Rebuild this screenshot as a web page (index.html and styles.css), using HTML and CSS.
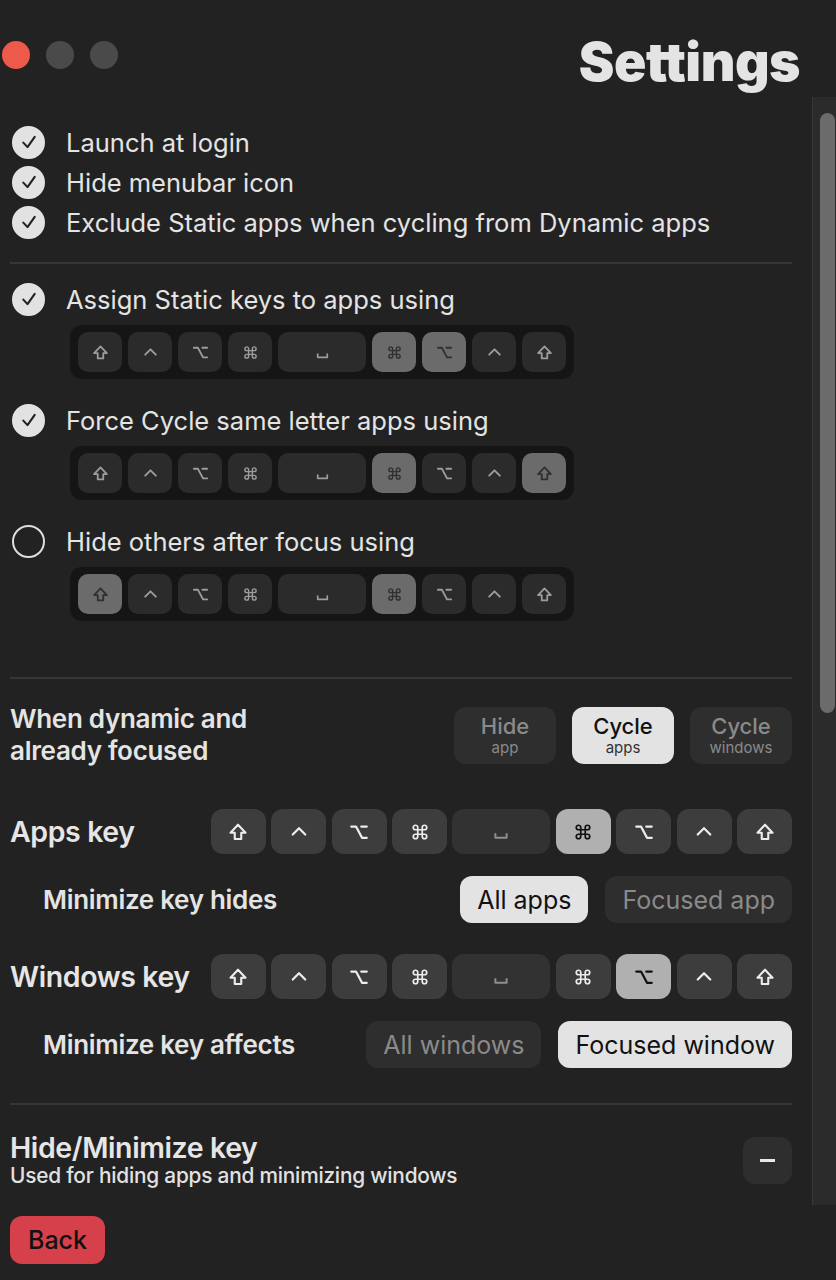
FILE: index.html
```html
<!DOCTYPE html>
<html lang="en">
<head>
<meta charset="utf-8">
<title>Settings</title>
<link rel="stylesheet" href="styles.css">
</head>
<body>
<svg class="defs" width="0" height="0" aria-hidden="true">
  <defs>
    <symbol id="i-shift" viewBox="0 0 16 16"><path d="M8 2.2 L14 8.6 H10.6 V13.6 H5.4 V8.6 H2 Z" fill="none" stroke="currentColor" stroke-width="1.7" stroke-linejoin="round"/></symbol>
    <symbol id="i-ctrl" viewBox="0 0 16 16"><path d="M3 10 L8 5 L13 10" fill="none" stroke="currentColor" stroke-width="1.8" stroke-linecap="round" stroke-linejoin="round"/></symbol>
    <symbol id="i-opt" viewBox="0 0 16 16"><path d="M1.8 3.6 H5.6 L10.4 12.6 H14.2 M9.8 3.6 H14.2" fill="none" stroke="currentColor" stroke-width="1.8" stroke-linecap="round" stroke-linejoin="round"/></symbol>
    <symbol id="i-cmd" viewBox="0 0 24 24"><path d="M15 6v12a3 3 0 1 0 3-3H6a3 3 0 1 0 3 3V6a3 3 0 1 0-3 3h12a3 3 0 1 0-3-3" fill="none" stroke="currentColor" stroke-width="2.3" stroke-linecap="round" stroke-linejoin="round"/></symbol>
    <symbol id="i-space" viewBox="0 0 16 16"><path d="M3.5 9.5 V12.5 H12.5 V9.5" fill="none" stroke="currentColor" stroke-width="1.6" stroke-linecap="round" stroke-linejoin="round"/></symbol>
    <symbol id="i-check" viewBox="0 0 16 16"><path d="M4.2 8.4 L7 11.4 L11.8 4.6" fill="none" stroke="currentColor" stroke-width="1.4" stroke-linecap="round" stroke-linejoin="round"/></symbol>
  </defs>
</svg>

<div class="window">
  <header class="titlebar">
    <div class="lights">
      <span class="light red"></span>
      <span class="light"></span>
      <span class="light"></span>
    </div>
    <h1 class="title">Settings</h1>
  </header>

  <div class="scroll-area">
    <main class="content">
      <section class="general">
        <div class="check-row"><span class="check on"><svg><use href="#i-check"/></svg></span><span class="check-label">Launch at login</span></div>
        <div class="check-row"><span class="check on"><svg><use href="#i-check"/></svg></span><span class="check-label">Hide menubar icon</span></div>
        <div class="check-row"><span class="check on"><svg><use href="#i-check"/></svg></span><span class="check-label">Exclude Static apps when cycling from Dynamic apps</span></div>
      </section>

      <hr class="sep sep-first">

      <section class="shortcuts">
        <div class="check-row"><span class="check on"><svg><use href="#i-check"/></svg></span><span class="check-label">Assign Static keys to apps using</span></div>
        <div class="keybar">
          <span class="k"><svg><use href="#i-shift"/></svg></span>
          <span class="k"><svg><use href="#i-ctrl"/></svg></span>
          <span class="k"><svg><use href="#i-opt"/></svg></span>
          <span class="k"><svg class="cmd"><use href="#i-cmd"/></svg></span>
          <span class="k space"><svg><use href="#i-space"/></svg></span>
          <span class="k on"><svg class="cmd"><use href="#i-cmd"/></svg></span>
          <span class="k on"><svg><use href="#i-opt"/></svg></span>
          <span class="k"><svg><use href="#i-ctrl"/></svg></span>
          <span class="k"><svg><use href="#i-shift"/></svg></span>
        </div>

        <div class="check-row"><span class="check on"><svg><use href="#i-check"/></svg></span><span class="check-label">Force Cycle same letter apps using</span></div>
        <div class="keybar">
          <span class="k"><svg><use href="#i-shift"/></svg></span>
          <span class="k"><svg><use href="#i-ctrl"/></svg></span>
          <span class="k"><svg><use href="#i-opt"/></svg></span>
          <span class="k"><svg class="cmd"><use href="#i-cmd"/></svg></span>
          <span class="k space"><svg><use href="#i-space"/></svg></span>
          <span class="k on"><svg class="cmd"><use href="#i-cmd"/></svg></span>
          <span class="k"><svg><use href="#i-opt"/></svg></span>
          <span class="k"><svg><use href="#i-ctrl"/></svg></span>
          <span class="k on"><svg><use href="#i-shift"/></svg></span>
        </div>

        <div class="check-row"><span class="check"></span><span class="check-label">Hide others after focus using</span></div>
        <div class="keybar">
          <span class="k on"><svg><use href="#i-shift"/></svg></span>
          <span class="k"><svg><use href="#i-ctrl"/></svg></span>
          <span class="k"><svg><use href="#i-opt"/></svg></span>
          <span class="k"><svg class="cmd"><use href="#i-cmd"/></svg></span>
          <span class="k space"><svg><use href="#i-space"/></svg></span>
          <span class="k on"><svg class="cmd"><use href="#i-cmd"/></svg></span>
          <span class="k"><svg><use href="#i-opt"/></svg></span>
          <span class="k"><svg><use href="#i-ctrl"/></svg></span>
          <span class="k"><svg><use href="#i-shift"/></svg></span>
        </div>
      </section>

      <hr class="sep sep-second">

      <section class="dynamic">
        <div class="dyn-label">When dynamic and<br>already focused</div>
        <div class="seg-group">
          <div class="seg"><span class="seg-main">Hide</span><span class="seg-sub">app</span></div>
          <div class="seg on"><span class="seg-main">Cycle</span><span class="seg-sub">apps</span></div>
          <div class="seg"><span class="seg-main">Cycle</span><span class="seg-sub">windows</span></div>
        </div>
      </section>

      <section class="key-row apps-key">
        <div class="key-label">Apps key</div>
        <div class="bigkeys">
          <span class="bk"><svg><use href="#i-shift"/></svg></span>
          <span class="bk"><svg><use href="#i-ctrl"/></svg></span>
          <span class="bk"><svg><use href="#i-opt"/></svg></span>
          <span class="bk"><svg class="cmd"><use href="#i-cmd"/></svg></span>
          <span class="bk space"><svg><use href="#i-space"/></svg></span>
          <span class="bk on"><svg class="cmd"><use href="#i-cmd"/></svg></span>
          <span class="bk"><svg><use href="#i-opt"/></svg></span>
          <span class="bk"><svg><use href="#i-ctrl"/></svg></span>
          <span class="bk"><svg><use href="#i-shift"/></svg></span>
        </div>
      </section>

      <section class="sub-row hides-row">
        <div class="sub-label">Minimize key hides</div>
        <div class="pill-group">
          <span class="pill on">All apps</span>
          <span class="pill">Focused app</span>
        </div>
      </section>

      <section class="key-row windows-key">
        <div class="key-label">Windows key</div>
        <div class="bigkeys">
          <span class="bk"><svg><use href="#i-shift"/></svg></span>
          <span class="bk"><svg><use href="#i-ctrl"/></svg></span>
          <span class="bk"><svg><use href="#i-opt"/></svg></span>
          <span class="bk"><svg class="cmd"><use href="#i-cmd"/></svg></span>
          <span class="bk space"><svg><use href="#i-space"/></svg></span>
          <span class="bk"><svg class="cmd"><use href="#i-cmd"/></svg></span>
          <span class="bk on"><svg><use href="#i-opt"/></svg></span>
          <span class="bk"><svg><use href="#i-ctrl"/></svg></span>
          <span class="bk"><svg><use href="#i-shift"/></svg></span>
        </div>
      </section>

      <section class="sub-row affects-row">
        <div class="sub-label">Minimize key affects</div>
        <div class="pill-group">
          <span class="pill">All windows</span>
          <span class="pill on">Focused window</span>
        </div>
      </section>

      <hr class="sep sep-third">

      <section class="hide-key">
        <div class="hide-text">
          <div class="key-label">Hide/Minimize key</div>
          <div class="hide-desc">Used for hiding apps and minimizing windows</div>
        </div>
        <span class="minus-key"><span class="minus"></span></span>
      </section>
    </main>

    <div class="scrollbar"><div class="thumb"></div></div>
  </div>

  <footer class="footer">
    <button class="back">Back</button>
  </footer>
</div>
</body>
</html>
```

FILE: styles.css
```css
html, body {
  margin: 0;
  padding: 0;
}
body {
  background: #222222;
  color: #e6e6e6;
  font-family: Inter, "Noto Sans", "Liberation Sans", sans-serif;
  width: 836px;
  height: 1280px;
  overflow: hidden;
}
.defs {
  position: absolute;
  width: 0;
  height: 0;
}
.window {
  width: 836px;
  height: 1280px;
  display: flex;
  flex-direction: column;
}

/* title bar */
.titlebar {
  height: 97px;
  display: flex;
  justify-content: space-between;
  align-items: flex-start;
  box-sizing: border-box;
  padding: 0 36px 0 2px;
}
.lights {
  display: flex;
  gap: 16px;
  margin-top: 41px;
}
.light {
  width: 28px;
  height: 28px;
  border-radius: 50%;
  background: #4a4a4a;
}
.light.red {
  background: #ed5a4b;
}
.title {
  margin: 31px 0 0 0;
  font-family: Inter, "Noto Sans", sans-serif;
  font-weight: 900;
  font-size: 53.5px;
  line-height: 62px;
  color: #e4e4e4;
  letter-spacing: -0.5px;
}

/* scroll area */
.scroll-area {
  height: 1108px;
  display: flex;
}
.content {
  flex: 1;
  padding: 0 20px 0 10px;
  min-width: 0;
}
.scrollbar {
  width: 24px;
  background: #2b2b2b;
  border-left: 1px solid #383838;
  box-sizing: border-box;
  padding: 16px 1px 0 7px;
}
.thumb {
  height: 600px;
  background: #6b6b6b;
  border-radius: 8px;
}

/* checkbox rows */
.general {
  margin-top: 25px;
}
.check-row {
  height: 40px;
  display: flex;
  align-items: center;
  gap: 21px;
  padding-left: 2px;
}
.check {
  width: 33px;
  height: 33px;
  border-radius: 50%;
  box-sizing: border-box;
  border: 2px solid #dedede;
  display: flex;
  align-items: center;
  justify-content: center;
  flex: none;
}
.check.on {
  background: #e2e2e2;
  border-color: #e2e2e2;
  color: #222;
}
.check svg {
  width: 24px;
  height: 24px;
}
.check-label {
  font-size: 25.5px;
  color: #e4e4e4;
  white-space: nowrap;
}

.sep {
  border: 0;
  height: 2px;
  background: #363636;
  margin: 0;
}
.sep-first {
  margin-top: 20px;
}
.shortcuts {
  margin-top: 15px;
}

/* small key bars */
.keybar {
  display: flex;
  gap: 6px;
  width: fit-content;
  margin: 6px 0 21px 60px;
  padding: 7px 8px;
  background: #151515;
  border-radius: 12px;
}
.keybar:last-child {
  margin-bottom: 0;
}
.k {
  width: 44px;
  height: 40px;
  border-radius: 10px;
  background: #2b2b2b;
  color: #9c9c9c;
  display: flex;
  align-items: center;
  justify-content: center;
}
.k svg {
  width: 17px;
  height: 17px;
}
.k svg.cmd {
  width: 15px;
  height: 15px;
}
.k.space {
  width: 88px;
}
.k.on {
  background: #6b6b6b;
  color: #303030;
}

.sep-second {
  margin-top: 56px;
}

/* dynamic */
.dynamic {
  margin-top: 24px;
  display: flex;
  justify-content: space-between;
  align-items: center;
}
.dyn-label {
  font-weight: 600;
  font-size: 26px;
  line-height: 32px;
  color: #e4e4e4;
  letter-spacing: -0.3px;
}
.seg-group {
  display: flex;
  gap: 16px;
}
.seg {
  width: 102px;
  height: 57px;
  border-radius: 12px;
  background: #2e2e2e;
  color: #8a8a8a;
  display: flex;
  flex-direction: column;
  align-items: center;
  justify-content: center;
}
.seg.on {
  background: #e3e3e3;
  color: #111;
}
.seg-main {
  font-size: 22px;
  font-weight: 500;
  line-height: 26px;
}
.seg-sub {
  font-size: 15px;
  line-height: 18px;
}
.seg.on .seg-sub {
  color: #333;
}

/* big key rows */
.key-row {
  display: flex;
  justify-content: space-between;
  align-items: center;
}
.apps-key {
  margin-top: 42px;
}
.windows-key {
  margin-top: 31px;
}
.key-label {
  font-weight: 600;
  font-size: 28.5px;
  line-height: 34px;
  color: #e6e6e6;
  letter-spacing: -0.4px;
}
.bigkeys {
  display: flex;
  gap: 5.4px;
}
.bk {
  width: 55px;
  height: 45px;
  border-radius: 12px;
  background: #3d3d3d;
  color: #ececec;
  display: flex;
  align-items: center;
  justify-content: center;
}
.bk svg {
  width: 20px;
  height: 20px;
}
.bk svg.cmd {
  width: 18px;
  height: 18px;
}
.bk.space {
  width: 98px;
  background: #323232;
  color: #8e8e8e;
}
.bk.on {
  background: #b0b0b0;
  color: #111;
}

/* sub rows */
.sub-row {
  margin-top: 22px;
  display: flex;
  justify-content: space-between;
  align-items: center;
  padding-left: 33px;
}
.sub-label {
  font-weight: 600;
  font-size: 26px;
  line-height: 32px;
  color: #e4e4e4;
  letter-spacing: -0.3px;
}
.pill-group {
  display: flex;
  gap: 17px;
}
.pill {
  height: 47px;
  padding: 0 17px;
  border-radius: 12px;
  background: #2e2e2e;
  color: #8a8a8a;
  font-size: 25px;
  display: flex;
  align-items: center;
}
.pill.on {
  background: #e3e3e3;
  color: #111;
}

.sep-third {
  margin-top: 35px;
}

/* hide/minimize */
.hide-key {
  margin-top: 27px;
  display: flex;
  justify-content: space-between;
  align-items: center;
}
.hide-key .key-label {
  line-height: 32px;
}
.hide-desc {
  font-size: 20.8px;
  font-weight: 500;
  line-height: 24px;
  color: #e2e2e2;
  letter-spacing: -0.2px;
}
.minus-key {
  width: 49px;
  height: 47px;
  border-radius: 12px;
  background: #2e2e2e;
  display: flex;
  align-items: center;
  justify-content: center;
}
.minus {
  width: 15px;
  height: 3px;
  background: #e8e8e8;
}

/* footer */
.footer {
  padding: 11px 0 0 10px;
}
.back {
  height: 48px;
  padding: 0 18px;
  border: 0;
  border-radius: 12px;
  background: #d6404b;
  color: #111;
  font-family: Inter, "Noto Sans", sans-serif;
  font-size: 25px;
  font-weight: 500;
}
```
